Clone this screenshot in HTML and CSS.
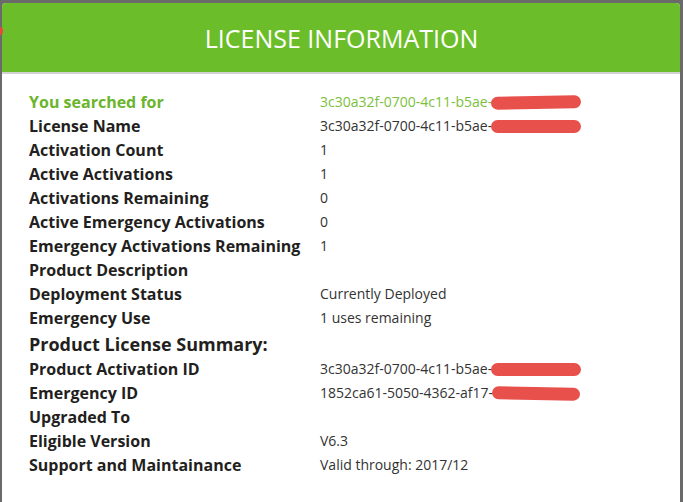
FILE: index.html
```html
<!DOCTYPE html>
<html>
<head>
<meta charset="utf-8">
<link rel="stylesheet" href="styles.css">
</head>
<body>
<div class="backdrop">
  <span class="red-dot"></span>
  <div class="modal">
    <div class="modal-header">
      <h1 class="title">LICENSE INFORMATION</h1>
    </div>
    <div class="modal-body">
      <div class="info-grid">
        <div class="label searched">You searched for</div>
        <div class="value searched">3c30a32f-0700-4c11-b5ae-<span class="redact r1"></span></div>

        <div class="label">License Name</div>
        <div class="value">3c30a32f-0700-4c11-b5ae-<span class="redact r2"></span></div>

        <div class="label">Activation Count</div>
        <div class="value">1</div>

        <div class="label">Active Activations</div>
        <div class="value">1</div>

        <div class="label">Activations Remaining</div>
        <div class="value">0</div>

        <div class="label">Active Emergency Activations</div>
        <div class="value">0</div>

        <div class="label">Emergency Activations Remaining</div>
        <div class="value">1</div>

        <div class="label">Product Description</div>
        <div class="value"></div>

        <div class="label">Deployment Status</div>
        <div class="value">Currently Deployed</div>

        <div class="label">Emergency Use</div>
        <div class="value">1 uses remaining</div>

        <div class="summary">Product License Summary:</div>

        <div class="label">Product Activation ID</div>
        <div class="value">3c30a32f-0700-4c11-b5ae-<span class="redact r3"></span></div>

        <div class="label">Emergency ID</div>
        <div class="value">1852ca61-5050-4362-af17-<span class="redact r4"></span></div>

        <div class="label">Upgraded To</div>
        <div class="value"></div>

        <div class="label">Eligible Version</div>
        <div class="value">V6.3</div>

        <div class="label">Support and Maintainance</div>
        <div class="value">Valid through: 2017/12</div>
      </div>
    </div>
  </div>
</div>
</body>
</html>
```

FILE: styles.css
```css
html, body {
  margin: 0;
  padding: 0;
  height: 100%;
  overflow: hidden;
  background: #6a6a6a;
}

.backdrop {
  position: relative;
  padding: 3px 3px 0 2px;
  height: 100%;
  box-sizing: border-box;
}

.red-dot {
  position: absolute;
  left: -3px;
  top: 27px;
  width: 6px;
  height: 8px;
  border-radius: 50%;
  background: #e9463f;
  z-index: 2;
}

.modal {
  background: #fff;
  border-radius: 4px 4px 0 0;
  height: 100%;
  font-family: "Open Sans", "Noto Sans", sans-serif;
  color: #2a2a2a;
}

.modal-header {
  height: 69px;
  background: #6bbe2a;
  border-radius: 4px 4px 0 0;
  border-bottom: 2px solid #d2d2d2;
  display: flex;
  align-items: center;
  justify-content: center;
}

.title {
  margin: 0;
  font-weight: 400;
  font-size: 25px;
  color: #fff;
  padding-left: 1px;
}

.modal-body {
  padding: 16px 0 0 27px;
}

.info-grid {
  display: grid;
  grid-template-columns: 291px 1fr;
  line-height: 24px;
}

.label {
  font-size: 16px;
  font-weight: 700;
  color: #231f20;
}

.value {
  font-size: 14px;
  color: #333;
  display: flex;
  align-items: center;
}

.searched {
  color: #6ab52b;
}

.value.searched {
  color: #7bbf3c;
}

.summary {
  grid-column: 1 / -1;
  font-size: 18px;
  font-weight: 700;
  line-height: 26px;
  color: #231f20;
  padding-top: 1px;
}

.redact {
  display: inline-block;
  height: 13px;
  background: #e8504c;
  border-radius: 7px;
  margin-left: -1px;
}

.r1 { width: 90px; transform: rotate(-1deg); }
.r2 { width: 90px; }
.r3 { width: 90px; }
.r4 { width: 88px; transform: rotate(1deg); }
```
